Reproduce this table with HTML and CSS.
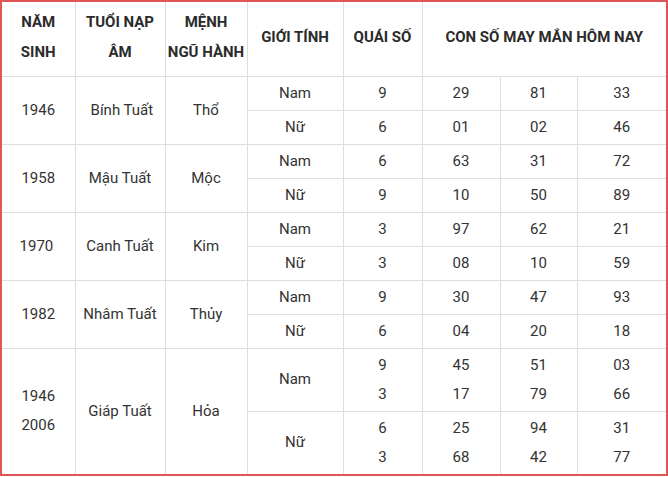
FILE: index.html
```html
<!DOCTYPE html>
<html lang="vi">
<head>
<meta charset="utf-8">
<link rel="stylesheet" href="styles.css">
</head>
<body>
<div class="frame">
<table class="lucky">
<colgroup>
<col class="c1"><col class="c2"><col class="c3"><col class="c4"><col class="c5"><col class="c6"><col class="c7"><col class="c8">
</colgroup>
<thead>
<tr class="head">
<th>NĂM SINH</th>
<th>TUỔI NẠP ÂM</th>
<th>MỆNH NGŨ HÀNH</th>
<th>GIỚI TÍNH</th>
<th>QUÁI SỐ</th>
<th colspan="3">CON SỐ MAY MẮN HÔM NAY</th>
</tr>
</thead>
<tbody>
<tr class="row"><td rowspan="2">1946</td><td rowspan="2">&nbsp;Bính Tuất</td><td rowspan="2">Thổ</td><td>Nam</td><td>9</td><td>29</td><td>81</td><td>33</td></tr>
<tr class="row"><td>Nữ</td><td>6</td><td>01</td><td>02</td><td>46</td></tr>
<tr class="row"><td rowspan="2">1958</td><td rowspan="2">Mậu Tuất</td><td rowspan="2">Mộc</td><td>Nam</td><td>6</td><td>63</td><td>31</td><td>72</td></tr>
<tr class="row"><td>Nữ</td><td>9</td><td>10</td><td>50</td><td>89</td></tr>
<tr class="row"><td rowspan="2">1970&nbsp;</td><td rowspan="2">Canh Tuất</td><td rowspan="2">Kim</td><td>Nam</td><td>3</td><td>97</td><td>62</td><td>21</td></tr>
<tr class="row"><td>Nữ</td><td>3</td><td>08</td><td>10</td><td>59</td></tr>
<tr class="row"><td rowspan="2">1982</td><td rowspan="2">Nhâm Tuất</td><td rowspan="2">Thủy</td><td>Nam</td><td>9</td><td>30</td><td>47</td><td>93</td></tr>
<tr class="row"><td>Nữ</td><td>6</td><td>04</td><td>20</td><td>18</td></tr>
<tr class="row tall"><td rowspan="2">1946<br>2006</td><td rowspan="2">Giáp Tuất</td><td rowspan="2">Hỏa</td><td>Nam</td><td>9<br>3</td><td>45<br>17</td><td>51<br>79</td><td>03<br>66</td></tr>
<tr class="row tall"><td>Nữ</td><td>6<br>3</td><td>25<br>68</td><td>94<br>42</td><td>31<br>77</td></tr>
</tbody>
</table>
</div>
</body>
</html>
```
FILE: styles.css
```css
html, body {
  margin: 0;
  padding: 0;
  background: #fff;
}
.frame {
  width: 664px;
  height: 472px;
  border: 2px solid #e05656;
  overflow: hidden;
}
.lucky {
  width: 664px;
  table-layout: fixed;
  border-collapse: collapse;
  border-style: hidden;
  font-family: Roboto, "Liberation Sans", Arial, sans-serif;
  font-size: 15px;
  color: #333;
}
.c1 { width: 73px; }
.c2 { width: 90px; }
.c3 { width: 82px; }
.c4 { width: 96px; }
.c5 { width: 79px; }
.c6 { width: 78px; }
.c7 { width: 77px; }
.c8 { width: 89px; }
.lucky th,
.lucky td {
  border: 1px solid #dedede;
  text-align: center;
  vertical-align: middle;
  padding: 0 2px;
}
.lucky th {
  font-weight: 700;
  color: #2b2b2b;
  line-height: 30px;
  padding-bottom: 3px;
}
.head { height: 74px; }
.row { height: 34px; }
.row td { line-height: 20px; }
.row.tall { height: 63px; }
.row.tall td { line-height: 29px; }
```
